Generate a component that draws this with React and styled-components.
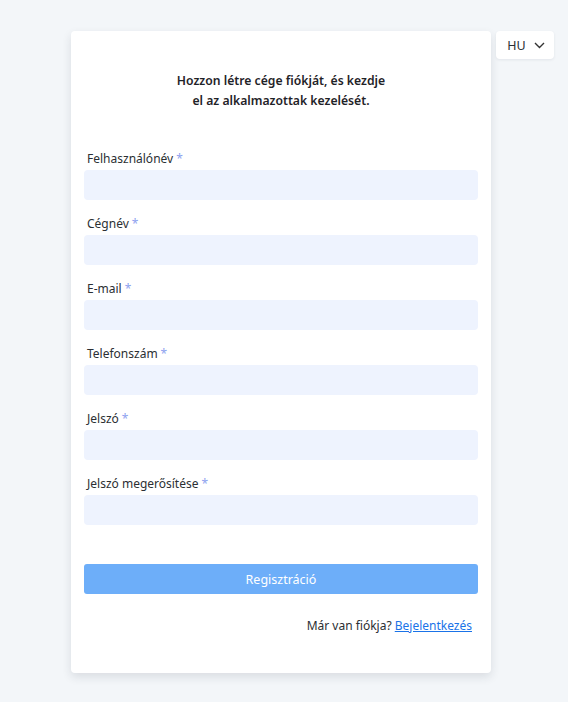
import React from "react";
import styled, { createGlobalStyle } from "styled-components";

const Global = createGlobalStyle`
  html, body { margin: 0; padding: 0; background: #f3f6f9; }
  body { font-family: "Noto Sans", "Open Sans", sans-serif; color: #1f2328; }
  * { box-sizing: border-box; }
`;

const Page = styled.div`
  min-height: 702px;
  display: flex;
  align-items: flex-start;
  gap: 5px;
  padding: 31px 0 0 71px;
`;

const Card = styled.div`
  width: 420px;
  background: #fff;
  border-radius: 4px;
  box-shadow: 0 4px 10px rgba(30, 40, 60, 0.12);
  padding: 40px 13px 38px;
  display: flex;
  flex-direction: column;
`;

const Title = styled.h1`
  margin: 0 0 38px;
  text-align: center;
  font-size: 12.2px;
  line-height: 20px;
  font-weight: 600;
  color: #1f2328;
`;

const Field = styled.div`
  display: flex;
  flex-direction: column;
  margin-bottom: 14px;
`;

const Label = styled.label`
  font-size: 12px;
  line-height: 19px;
  padding-left: 3px;
  margin-bottom: 2px;
  color: #2b2f33;
`;

const Star = styled.span`
  color: #8ea2ef;
  margin-left: 3px;
`;

const Input = styled.input`
  height: 30px;
  border: none;
  border-radius: 4px;
  background: #eef3fe;
  outline: none;
  padding: 0 10px;
  font: inherit;
`;

const Button = styled.button`
  margin-top: 25px;
  height: 30px;
  border: none;
  border-radius: 3px;
  background: #6daef9;
  color: #fff;
  font-family: inherit;
  font-size: 12.5px;
`;

const Footer = styled.div`
  margin-top: 23px;
  padding-right: 6px;
  text-align: right;
  font-size: 12px;
  line-height: 18px;
  color: #2b2f33;
`;

const Link = styled.a`
  color: #1a73e8;
  text-decoration: underline;
  cursor: pointer;
`;

const Lang = styled.button`
  width: 58px;
  height: 28px;
  display: flex;
  align-items: center;
  justify-content: center;
  gap: 8px;
  background: #fff;
  border: none;
  border-radius: 4px;
  box-shadow: 0 1px 3px rgba(30, 40, 60, 0.08);
  font-family: inherit;
  font-size: 12.5px;
  color: #2b2f33;
  padding: 0 0 0 2px;
`;

const fields = [
  "Felhasználónév",
  "Cégnév",
  "E-mail",
  "Telefonszám",
  "Jelszó",
  "Jelszó megerősítése",
];

export default function App() {
  return (
    <>
      <Global />
      <Page>
        <Card>
          <Title>
            Hozzon létre cége fiókját, és kezdje
            <br />
            el az alkalmazottak kezelését.
          </Title>
          {fields.map((f) => (
            <Field key={f}>
              <Label>
                {f}
                <Star>*</Star>
              </Label>
              <Input type={f.startsWith("Jelszó") ? "password" : "text"} />
            </Field>
          ))}
          <Button>Regisztráció</Button>
          <Footer>
            Már van fiókja? <Link>Bejelentkezés</Link>
          </Footer>
        </Card>
        <Lang>
          HU
          <svg width="11" height="7" viewBox="0 0 11 7" fill="none">
            <path d="M1 1l4.5 4.5L10 1" stroke="#333" strokeWidth="1.4" />
          </svg>
        </Lang>
      </Page>
    </>
  );
}
